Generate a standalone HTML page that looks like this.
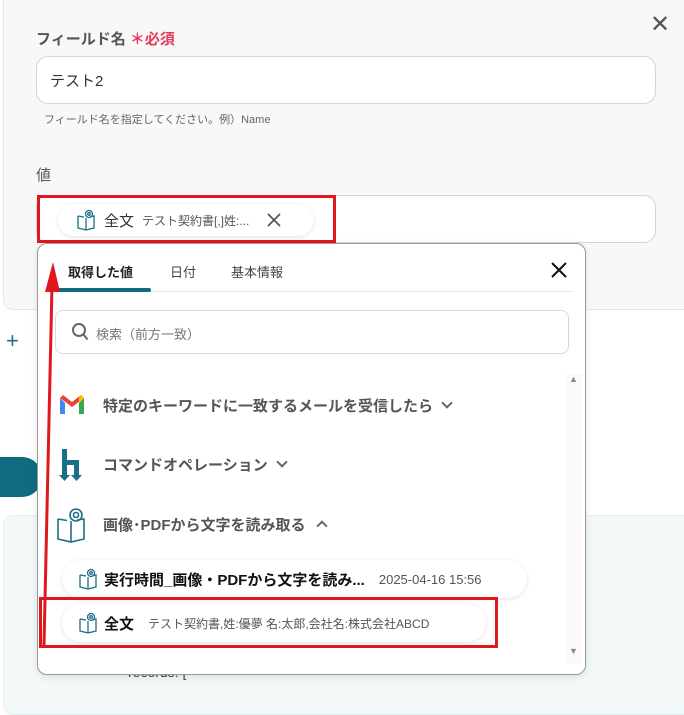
<!DOCTYPE html>
<html><head><meta charset="utf-8"><style>
*{box-sizing:border-box;margin:0;padding:0}
body{width:684px;height:681px;overflow:hidden;background:#fff;font-family:"Liberation Sans","Noto Sans CJK JP",sans-serif;position:relative;color:#333}
.abs{position:absolute}
.card{left:3px;top:-10px;width:690px;height:320px;background:#f8f8f8;border:1px solid #e6e6e6;border-radius:10px}
.lbl{font-size:15px;color:#555;font-weight:bold}
.inp{background:#fff;border:1px solid #d6d6d6;border-radius:12px}
.pill{background:#fff;border-radius:20px;box-shadow:0 1px 4px rgba(0,0,0,.12);display:flex;align-items:center}
.red{border:3px solid #e0171c}
.chev{display:inline-block;width:8px;height:8px;border-right:2px solid #666;border-bottom:2px solid #666;transform:rotate(45deg);margin-left:10px;position:relative;top:-4px}
.chevu{display:inline-block;width:8px;height:8px;border-left:2px solid #666;border-top:2px solid #666;transform:rotate(45deg);margin-left:12px;position:relative;top:0}
</style></head><body>
<div class="abs card"></div>
<div class="abs" style="left:650px;top:10px;font-size:24px;color:#555">✕</div>
<div class="abs lbl" style="left:36px;top:28px">フィールド名 <span style="color:#e23b5a">＊必須</span></div>
<div class="abs inp" style="left:36px;top:56px;width:620px;height:48px"></div>
<div class="abs" style="left:50px;top:70px;font-size:15px;color:#333">テスト2</div>
<div class="abs" style="left:44px;top:111px;font-size:11px;color:#666">フィールド名を指定してください。例）Name</div>
<div class="abs lbl" style="left:36px;top:164px;font-weight:normal">値</div>
<div class="abs inp" style="left:36px;top:195px;width:620px;height:48px"></div>
<div class="abs pill" style="left:58px;top:204px;width:256px;height:32px;padding-left:18px">
<svg width="20" height="22" viewBox="0 0 20 22" fill="none" stroke="#1b6f86" stroke-width="1.3"><path d="M2 7v12l8 2 8-2V7l-4 1M2 7l6 1M10 9v12"/><circle cx="13" cy="5" r="3.5"/><circle cx="13" cy="5" r="1.3"/></svg>
<span style="font-size:15px;margin-left:8px">全文</span><span style="font-size:12px;color:#555;margin-left:8px">テスト契約書[,]姓:...</span>
<svg style="margin-left:18px" width="14" height="14" viewBox="0 0 14 14" stroke="#555" stroke-width="1.8"><path d="M1 1l12 12M13 1L1 13"/></svg></div>
<div class="abs red" style="left:37px;top:195px;width:299px;height:48px"></div>
<div class="abs" style="left:6px;top:328px;font-size:22px;color:#1b6f86">+</div>
<div class="abs" style="left:0;top:457px;width:42px;height:40px;background:#0f6b80;border-radius:0 20px 20px 0"></div>
<div class="abs" style="left:3px;top:515px;width:690px;height:200px;background:#f2f9f8;border:1px solid #e3eeee;border-radius:10px"></div>
<div class="abs" style="left:128px;top:664px;font-size:14px;color:#444">records: [</div>

<div class="abs" style="left:37px;top:243px;width:549px;height:432px;background:#fff;border:1px solid #9a9a9a;border-radius:10px;box-shadow:0 2px 8px rgba(0,0,0,.1)">
<div class="abs" style="left:30px;top:18px;font-size:13px;font-weight:bold;color:#222">取得した値</div>
<div class="abs" style="left:132px;top:18px;font-size:13px;color:#444">日付</div>
<div class="abs" style="left:193px;top:18px;font-size:13px;color:#444">基本情報</div>
<svg class="abs" style="left:513px;top:18px" width="16" height="16" viewBox="0 0 16 16" stroke="#111" stroke-width="2"><path d="M1 1l14 14M15 1L1 15"/></svg>
<div class="abs" style="left:14px;top:47px;width:521px;height:1px;background:#e3e3e3"></div>
<div class="abs" style="left:13px;top:44px;width:100px;height:4px;background:#0f6b80;border-radius:2px"></div>
<div class="abs" style="left:17px;top:66px;width:514px;height:44px;border:1px solid #d8d8d8;border-radius:8px"></div>
<div class="abs" style="left:33px;top:78px"><svg width="18" height="20" viewBox="0 0 18 20" fill="none" stroke="#666" stroke-width="2"><circle cx="8" cy="8" r="6"/><path d="M12.5 12.5l4 5"/></svg></div>
<div class="abs" style="left:58px;top:80px;font-size:13px;color:#777">検索（前方一致）</div>
<div class="abs" style="left:529px;top:130px;width:16px;height:290px;background:#fafafa"></div>
<div class="abs" style="left:531px;top:130px;font-size:9px;color:#888">▲</div>
<div class="abs" style="left:531px;top:402px;font-size:9px;color:#888">▼</div>
<div class="abs" style="left:20px;top:150px"><svg width="28" height="22" viewBox="0 0 28 22"><path d="M2 4v16h5V9z" fill="#4285f4"/><path d="M21 9v11h5V4z" fill="#34a853"/><path d="M2 4l12 9 12-9-3-3-9 7-9-7z" fill="#ea4335"/><path d="M21 9l5-5-3-3-2 2z" fill="#fbbc04"/></svg></div>
<div class="abs" style="left:65px;top:151px;font-size:15px;font-weight:bold;color:#555">特定のキーワードに一致するメールを受信したら<span class="chev"></span></div>
<div class="abs" style="left:20px;top:205px"><svg width="28" height="32" viewBox="0 0 28 32" fill="#1b6f86"><path d="M4 0h5v26h3l-5.5 6L1 26h3z"/><path d="M9 11h12v15h3l-5.5 6L13 26h3V16H9z"/></svg></div>
<div class="abs" style="left:65px;top:210px;font-size:15px;font-weight:bold;color:#555">コマンドオペレーション<span class="chev"></span></div>
<div class="abs" style="left:18px;top:263px"><svg width="30" height="36" viewBox="0 0 30 36" fill="none" stroke="#1b6f86" stroke-width="1.6"><path d="M2 12v20l13 3 13-3V12l-7 1M2 12l9 1.5M15 14v21"/><circle cx="20" cy="8" r="6"/><circle cx="20" cy="8" r="2.5"/></svg></div>
<div class="abs" style="left:65px;top:270px;font-size:15px;font-weight:bold;color:#555">画像･PDFから文字を読み取る<span class="chevu"></span></div>
<div class="abs pill" style="left:24px;top:316px;width:465px;height:38px;padding-left:16px">
<svg width="20" height="22" viewBox="0 0 20 22" fill="none" stroke="#1b6f86" stroke-width="1.3"><path d="M2 7v12l8 2 8-2V7l-4 1M2 7l6 1M10 9v12"/><circle cx="13" cy="5" r="3.5"/><circle cx="13" cy="5" r="1.3"/></svg>
<span style="font-size:15px;font-weight:bold;color:#111;margin-left:6px">実行時間_画像・PDFから文字を読み...</span><span style="font-size:13px;color:#555;margin-left:14px">2025-04-16 15:56</span></div>
<div class="abs pill" style="left:24px;top:360px;width:424px;height:38px;padding-left:16px">
<svg width="20" height="22" viewBox="0 0 20 22" fill="none" stroke="#1b6f86" stroke-width="1.3"><path d="M2 7v12l8 2 8-2V7l-4 1M2 7l6 1M10 9v12"/><circle cx="13" cy="5" r="3.5"/><circle cx="13" cy="5" r="1.3"/></svg>
<span style="font-size:15px;font-weight:bold;color:#111;margin-left:6px">全文</span><span style="font-size:12px;color:#555;margin-left:14px">テスト契約書,姓:優夢 名:太郎,会社名:株式会社ABCD</span></div>
</div>
<div class="abs red" style="left:39px;top:597px;width:459px;height:51px"></div>
<svg class="abs" style="left:0;top:0" width="684" height="681"><path d="M44 645L52 285" stroke="#e0171c" stroke-width="3"/><path d="M53 262L45 292L60 292Z" fill="#e0171c"/></svg>
</body></html>
